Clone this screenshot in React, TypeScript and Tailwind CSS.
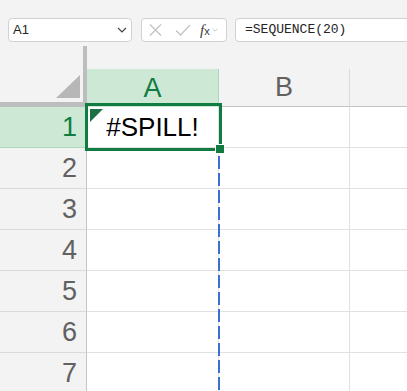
const rows = [1, 2, 3, 4, 5, 6, 7];

function Chevron({ className }: { className?: string }) {
  return (
    <svg width="10" height="6" viewBox="0 0 10 6" className={className} fill="none" stroke="currentColor" strokeWidth="1.2">
      <path d="M1 1l4 4 4-4" />
    </svg>
  );
}

export default function App() {
  return (
    <div className="relative w-[407px] h-[391px] overflow-hidden bg-[#f3f3f3] font-['Liberation_Sans',Arial,sans-serif]">
      {/* Formula bar */}
      <div className="h-[69px] pt-[18px]">
        <div className="flex h-[24px] w-[600px]">
          <div className="ml-[8px] w-[124px] h-[24px] bg-white border border-[#d1d1d1] rounded-[4px] flex items-center pl-[4px] pr-[4px]">
            <span className="flex-1 text-[13px] text-[#242424]">A1</span>
            <Chevron className="text-[#444]" />
          </div>
          <div className="ml-[9px] w-[86px] h-[24px] bg-white border border-[#d1d1d1] rounded-[4px] flex items-center pl-[7px]">
            <svg width="13" height="12" viewBox="0 0 13 12" fill="none" stroke="#c4c4c4" strokeWidth="1.3">
              <path d="M1 0.5l11 11M12 0.5l-11 11" />
            </svg>
            <svg width="16" height="12" viewBox="0 0 16 12" fill="none" stroke="#c4c4c4" strokeWidth="1.3" className="ml-[13px]">
              <path d="M1 6.5l4.5 4.5L15 1" />
            </svg>
            <span className="ml-[9px] font-['Liberation_Serif',serif] italic text-[15px] text-[#3a3a3a] leading-none">
              f<span className="text-[11px] not-italic font-['Liberation_Sans',sans-serif]">x</span>
            </span>
            <Chevron className="ml-[2px] w-[6px] h-[4px] text-[#b5b5b5]" />
          </div>
          <div className="ml-[8px] w-[220px] h-[24px] bg-white border border-[#d1d1d1] rounded-[4px] flex items-center pl-[9px]">
            <span className="font-['Liberation_Mono',monospace] text-[13px] text-[#242424]">=SEQUENCE(20)</span>
          </div>
        </div>
        <div className="ml-[83px] mt-[4px] w-[4px] h-[23px] bg-[#bdbdbd]" />
      </div>

      {/* Grid */}
      <div className="grid grid-cols-[87px_132px_131px_57px] grid-rows-[38px_repeat(7,41px)]">
        {/* Corner */}
        <div className="bg-[#f3f3f3] border-r-[4px] border-b-[5px] border-[#bdbdbd] flex items-end justify-end pr-[3px] pb-[4px]">
          <svg width="24" height="23" viewBox="0 0 24 23">
            <polygon points="24,0 24,23 0,23" fill="#b7b7b7" />
          </svg>
        </div>
        <div className="bg-[#cde9d6] border-r border-[#a9d9b9] flex items-center justify-center text-[27px] text-[#107c41]">
          A
        </div>
        <div className="bg-[#f3f3f3] border-r border-b border-r-[#dadada] border-b-[#c4c4c4] flex items-center justify-center text-[27px] text-[#616161]">
          B
        </div>
        <div className="bg-[#f3f3f3] border-b border-[#c4c4c4]" />

        {rows.map((r) => (
          <div key={r} className="contents">
            <div
              className={
                r === 1
                  ? "bg-[#cde9d6] border-r border-b border-r-[#107c41] border-b-[#a9d9b9] flex items-center justify-end pr-[9px] text-[27px] text-[#107c41]"
                  : "bg-[#f3f3f3] border-r border-b border-r-[#c4c4c4] border-b-[#dadada] flex items-center justify-end pr-[9px] text-[27px] text-[#616161]"
              }
            >
              {r}
            </div>
            <div className="relative bg-white border-r border-b border-[#e1e1e1] flex items-center justify-center text-[26px] text-black">
              {r === 1 && (
                <>
                  <svg width="13" height="13" viewBox="0 0 13 13" className="absolute left-[3px] top-[2px]">
                    <polygon points="0,0 13,0 0,13" fill="#1e7145" />
                  </svg>
                  #SPILL!
                </>
              )}
            </div>
            <div className="bg-white border-r border-b border-[#e1e1e1]" />
            <div className="bg-white border-b border-[#e1e1e1]" />
          </div>
        ))}
      </div>

      {/* Selection box */}
      <div className="absolute left-[85px] top-[103px] w-[137px] h-[48px] border-[3px] border-[#107c41]" />
      {/* Fill handle */}
      <div className="absolute left-[215px] top-[144px] w-[10px] h-[10px] bg-[#107c41] border border-white" />
      {/* Spill range */}
      <svg width="2" height="240" className="absolute left-[218px] top-[156px]">
        <line x1="1" y1="0" x2="1" y2="240" stroke="#3b6fd0" strokeWidth="2" strokeDasharray="13 4" />
      </svg>
    </div>
  );
}
